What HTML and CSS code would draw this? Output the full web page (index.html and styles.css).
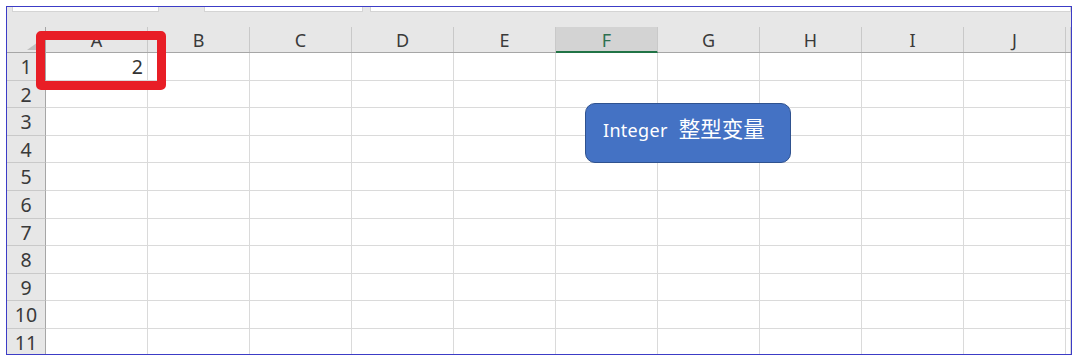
FILE: index.html
```html
<!DOCTYPE html>
<html lang="zh-CN">
<head>
  <meta charset="UTF-8">
  <title>Integer 整型变量</title>
  <link rel="stylesheet" href="styles.css">
</head>
<body>
  <div class="frame">
    <div class="formula">
      <span class="fx-gap first"></span>
      <span class="fx-box name"></span>
      <span class="fx-gap wide"></span>
      <span class="fx-box mid"></span>
      <span class="fx-gap"></span>
      <span class="fx-box rest"></span>
    </div>
    <div id="sheet" class="sheet"></div>

    <div class="mark"></div>
    <div class="shape"><span class="en">Integer</span><span class="cn">整型变量</span></div>
  </div>

  <script>
    const sheet = document.getElementById('sheet');
    const cols = ['A', 'B', 'C', 'D', 'E', 'F', 'G', 'H', 'I', 'J', ''];
    const values = { 'A1': '2' };

    let html = '<div class="hd corner"><span class="lbl"><i class="tri"></i></span></div>';
    cols.forEach(c => {
      const cls = c === 'F' ? 'lbl active' : 'lbl';
      html += `<div class="hd"><span class="${cls}">${c}</span></div>`;
    });

    for (let r = 1; r <= 11; r++) {
      html += `<div class="rh">${r}</div>`;
      cols.forEach(c => {
        const v = values[c + r] || '';
        html += `<div class="cell">${v}</div>`;
      });
    }
    sheet.innerHTML = html;
  </script>
</body>
</html>
```

FILE: styles.css
```css
body {
  margin: 0;
  background: #ffffff;
  font-family: 'Noto Sans', 'Liberation Sans', sans-serif;
}

.frame {
  position: relative;
  margin: 6px 0 0 6px;
  width: 1066px;
  height: 349px;
  box-sizing: border-box;
  border: 1px solid #3c3cc6;
  overflow: hidden;
  background: #e7e7e7;
}

.formula {
  display: flex;
  height: 5px;
}
.fx-gap {
  width: 7px;
  background: #e7e7e7;
}
.fx-gap.first { width: 5px; }
.fx-gap.wide { width: 45px; }
.fx-box {
  background: #ffffff;
  border: 1px solid #d4d4d4;
  border-top: none;
}
.fx-box.name { width: 145px; }
.fx-box.mid { width: 157px; }
.fx-box.rest { flex: 1; }

.sheet {
  display: grid;
  grid-template-columns: 39px repeat(10, 102px) 1fr;
  grid-template-rows: 41px repeat(11, 27.6px);
}

.hd {
  display: flex;
  align-items: flex-end;
  border-bottom: 1px solid #a6a6a6;
  box-sizing: border-box;
}
.lbl {
  width: 100%;
  height: 25px;
  box-sizing: border-box;
  border-right: 1px solid #c9c9c9;
  padding-top: 2px;
  text-align: center;
  font-size: 18px;
  line-height: 23px;
  color: #3a3a3a;
}
.lbl.active {
  background: #d3d3d3;
  color: #2e7050;
  border-bottom: 2px solid #217346;
  margin-bottom: -1px;
  height: 26px;
}
.corner .lbl {
  position: relative;
  border-right-color: #a6a6a6;
}
.tri {
  position: absolute;
  right: 0;
  bottom: 2px;
  width: 0;
  height: 0;
  border-left: 18px solid transparent;
  border-bottom: 13px solid #bfbfbf;
}

.rh {
  background: #e7e7e7;
  border-right: 1px solid #a6a6a6;
  border-bottom: 1px solid #c9c9c9;
  box-sizing: border-box;
  padding-top: 2px;
  text-align: center;
  font-size: 19.5px;
  line-height: 24px;
  color: #3a3a3a;
}

.cell {
  background: #ffffff;
  border-right: 1px solid #dadada;
  border-bottom: 1px solid #dadada;
  box-sizing: border-box;
  padding: 2px 4px 0 0;
  text-align: right;
  font-size: 19.5px;
  line-height: 24px;
  color: #333333;
}

.mark {
  position: absolute;
  left: 29px;
  top: 24px;
  width: 130px;
  height: 59px;
  box-sizing: border-box;
  border: 9px solid #e81e26;
  border-radius: 5px;
}

.shape {
  position: absolute;
  left: 578px;
  top: 96px;
  width: 206px;
  height: 60px;
  box-sizing: border-box;
  background: #4472c4;
  border: 1.5px solid #2f528f;
  border-radius: 10px;
  padding: 8px 0 0 17px;
  color: #ffffff;
  white-space: nowrap;
}
.shape .en {
  font-size: 18px;
  letter-spacing: 0.3px;
}
.shape .cn {
  margin-left: 11px;
  font-family: 'Noto Sans CJK SC', sans-serif;
  font-size: 21.5px;
}
```
